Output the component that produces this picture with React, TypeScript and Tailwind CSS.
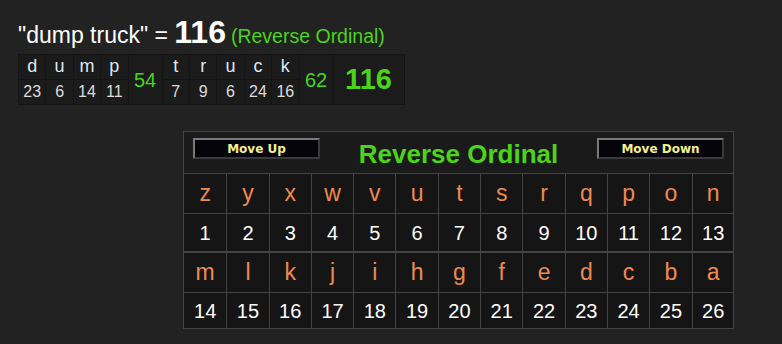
import React from "react";

const word1 = [["d", 23], ["u", 6], ["m", 14], ["p", 11]] as const;
const word2 = [["t", 7], ["r", 9], ["u", 6], ["c", 24], ["k", 16]] as const;

const row1 = "zyxwvutsrqpon".split("");
const row2 = "mlkjihgfedcba".split("");

function LetterCell({ l, v }: { l: string; v: number }) {
  return (
    <div className="flex flex-col gap-px">
      <div className="w-[26.4px] h-[24px] bg-[#1b1b1b] flex items-center justify-center text-[18px] leading-none text-[#dfe9f3] pb-[3px]">
        {l}
      </div>
      <div className="w-[26.4px] h-[24px] bg-[#1b1b1b] flex items-center justify-center text-[16px] leading-none text-[#dcdcdc]">
        {v}
      </div>
    </div>
  );
}

function Grid({ letters, start, numH }: { letters: string[]; start: number; numH: string }) {
  return (
    <div className="grid grid-cols-[repeat(13,42.3px)]">
      {letters.map((l, i) => (
        <div
          key={"l" + i}
          className={`h-[40px] flex items-center justify-center text-[23px] leading-none text-[#ef8a4e] border-b border-[#444] ${i > 0 ? "border-l" : ""}`}
        >
          {l}
        </div>
      ))}
      {letters.map((_, i) => (
        <div
          key={"n" + i}
          className={`${numH} flex items-center justify-center text-[20px] leading-none text-white ${i > 0 ? "border-l border-[#444]" : ""}`}
        >
          {start + i}
        </div>
      ))}
    </div>
  );
}

export default function App() {
  return (
    <div className="w-[782px] h-[344px] bg-[#222222] font-['Liberation_Sans',Arial,sans-serif] overflow-hidden">
      <div className="pl-[18px] pt-[16px] h-[44px] flex items-baseline text-white leading-none">
        <span className="text-[23px]">"dump truck" =&nbsp;</span>
        <span className="text-[32px] font-bold">116</span>
        <span className="text-[19.5px] text-[#4cd31c] ml-[5px]">(Reverse Ordinal)</span>
      </div>
      <div className="ml-[18px] mt-[10px] flex gap-px bg-[#141414] p-px w-fit">
        {word1.map(([l, v], i) => (
          <LetterCell key={i} l={l} v={v} />
        ))}
        <div className="w-[33px] bg-[#1b1b1b] flex items-center justify-center text-[20px] text-[#4cd31c]">54</div>
        {word2.map(([l, v], i) => (
          <LetterCell key={i} l={l} v={v} />
        ))}
        <div className="w-[33px] bg-[#1b1b1b] flex items-center justify-center text-[20px] text-[#4cd31c]">62</div>
        <div className="w-[70px] bg-[#1b1b1b] flex items-center justify-center text-[29px] font-bold text-[#4cd31c]">116</div>
      </div>
      <div className="ml-[183px] mt-[26px] w-[551px] border border-[#444] bg-[#181818]">
        <div className="h-[42px] flex items-start justify-between px-[9px] pt-[6px] bg-[#1a1a1a] border-b border-[#444]">
          <button className="w-[127px] h-[21px] bg-[#04040a] border-2 border-t-[#7a7a7a] border-l-[#7a7a7a] border-r-[#3a3a3a] border-b-[#3a3a3a] text-[12px] font-bold text-[#f4f08a] font-['DejaVu_Sans',sans-serif] leading-none">
            Move Up
          </button>
          <div className="text-[26px] font-bold text-[#4cd31c] mt-[1px] leading-[30px]">Reverse Ordinal</div>
          <button className="w-[127px] h-[21px] bg-[#04040a] border-2 border-t-[#7a7a7a] border-l-[#7a7a7a] border-r-[#3a3a3a] border-b-[#3a3a3a] text-[12px] font-bold text-[#f4f08a] font-['DejaVu_Sans',sans-serif] leading-none">
            Move Down
          </button>
        </div>
        <div className="bg-[#151515]">
          <Grid letters={row1} start={1} numH="h-[37px]" />
          <div className="border-t-2 border-[#444]" />
          <Grid letters={row2} start={14} numH="h-[35px]" />
        </div>
      </div>
    </div>
  );
}
